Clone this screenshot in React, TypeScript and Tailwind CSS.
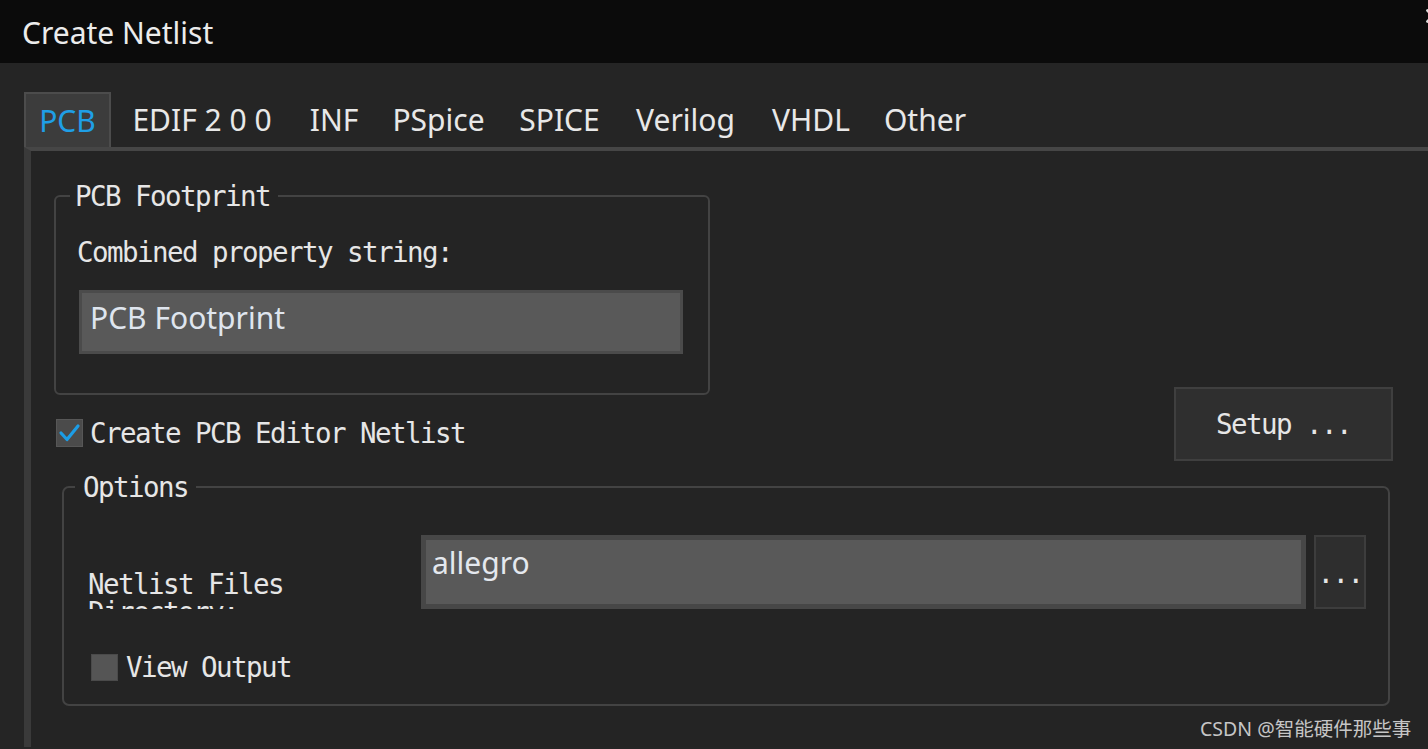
import { X } from 'lucide-react';

const mono = "font-['DejaVu_Sans_Mono',monospace] text-[27.5px] leading-[28px] tracking-[-1.56px] text-[#e6e6e6] whitespace-pre";
const sans = "font-['Noto_Sans',sans-serif]";

const tabs = [
  { label: 'PCB', w: 'w-[87px]', active: true },
  { label: 'EDIF 2 0 0', w: 'w-[182px]' },
  { label: 'INF', w: 'w-[82px]' },
  { label: 'PSpice', w: 'w-[127px]' },
  { label: 'SPICE', w: 'w-[115px]' },
  { label: 'Verilog', w: 'w-[137px]' },
  { label: 'VHDL', w: 'w-[114px]' },
  { label: 'Other', w: 'w-[114px]' },
];

function Check({ checked }: { checked?: boolean }) {
  if (checked) {
    return (
      <div className="w-[27px] h-[28px] bg-[#4b4b4b] border border-[#575757] shrink-0">
        <svg width="25" height="26" viewBox="0 0 25 26">
          <path d="M4 13 L10 19.5 L21 6" fill="none" stroke="#1c9de6" strokeWidth="3.2" strokeLinecap="round" strokeLinejoin="round" />
        </svg>
      </div>
    );
  }
  return <div className="w-[27px] h-[27px] bg-[#555555] border border-[#4a4a4a] shrink-0" />;
}

export default function App() {
  return (
    <div className={`w-[1428px] h-[749px] overflow-hidden bg-[#252525] relative ${sans}`}>
      {/* title bar */}
      <div className="h-[63px] bg-[#0b0b0b] flex items-start justify-between pl-[22px]">
        <div className="text-[30px] leading-[40px] mt-[13px] text-[#ececec]">Create Netlist</div>
        <X size={22} strokeWidth={3} className="text-[#dcdcdc] mt-[5px] mr-[-16px]" />
      </div>

      <div className="pl-[24px] pt-[29px]">
        {/* tabs */}
        <div className="flex h-[55px]">
          {tabs.map((t) => (
            <div
              key={t.label}
              className={`${t.w} h-full flex items-center justify-center text-[30px] leading-[40px] ${
                t.active ? 'bg-[#3c3c3c] border-2 border-b-0 border-[#4c4c4c] text-[#1f9fe6]' : 'text-[#e8e8e8]'
              }`}
            >
              {t.label}
            </div>
          ))}
        </div>

        {/* tab panel */}
        <div className="border-l-[7px] border-t-4 border-l-[#3a3a3a] border-t-[#464646] pl-[23px] pr-[35px] h-[600px] bg-[#242424]">
          <div className="flex items-start justify-between mt-[31px]">
            <div className="w-[656px]">
              <fieldset className="rounded-[6px] border-2 border-[#434343] pl-[21px] pr-[24px] pb-[39px]">
                <legend className={`${mono} ml-[-7px] pl-[5px] pr-[8px]`}>PCB Footprint</legend>
                <div className={`${mono} mt-[28px]`}>Combined property string:</div>
                <div className="mt-[24px] ml-[2px] w-[604px] h-[64px] border-[3px] border-[#4b4b4b] bg-[#595959] pl-[8px] pt-[5px]">
                  <span className="text-[30px] leading-[40px] text-[#dfe5ee]">PCB Footprint</span>
                </div>
              </fieldset>
              <div className="flex items-center mt-[24px] ml-[2px] gap-[7px]">
                <Check checked />
                <span className={mono}>Create PCB Editor Netlist</span>
              </div>
            </div>
            <button className="mt-[205px] w-[219px] h-[74px] bg-[#2f2f2f] border-2 border-[#3f3f3f] flex items-center justify-center">
              <span className={mono}>Setup ...</span>
            </button>
          </div>

          <fieldset className="mt-[12px] ml-[8px] mr-[3px] rounded-[7px] border-2 border-[#434343] pl-[24px] pr-[22px] pb-[23px]">
            <legend className={`${mono} ml-[-13px] px-[8px]`}>Options</legend>
            <div className="flex mt-[34px]">
              <div className="w-[333px] h-[74px] overflow-hidden pt-[35px]">
                <div className={mono}>Netlist Files</div>
                <div className={mono}>Directory:</div>
              </div>
              <div className="w-[885px] h-[74px] border-[5px] border-[#474747] bg-[#595959] pl-[6px] pt-[3px]">
                <span className="text-[30px] leading-[40px] text-[#e4e8ee]">allegro</span>
              </div>
              <div className="ml-[8px] w-[52px] h-[74px] bg-[#2e2e2e] border-2 border-[#3d3d3d] pt-[22px] text-center">
                <span className={mono}>...</span>
              </div>
            </div>
            <div className="flex items-center mt-[44px] ml-[3px] gap-[8px]">
              <Check />
              <span className={mono}>View Output</span>
            </div>
          </fieldset>
        </div>
      </div>

      {/* watermark */}
      <div className="absolute left-[1200px] top-[719px] text-[19.5px] leading-[20px] text-[#c6c6c6] font-['Noto_Sans','Noto_Sans_CJK_SC',sans-serif]">
        CSDN @智能硬件那些事
      </div>
    </div>
  );
}
